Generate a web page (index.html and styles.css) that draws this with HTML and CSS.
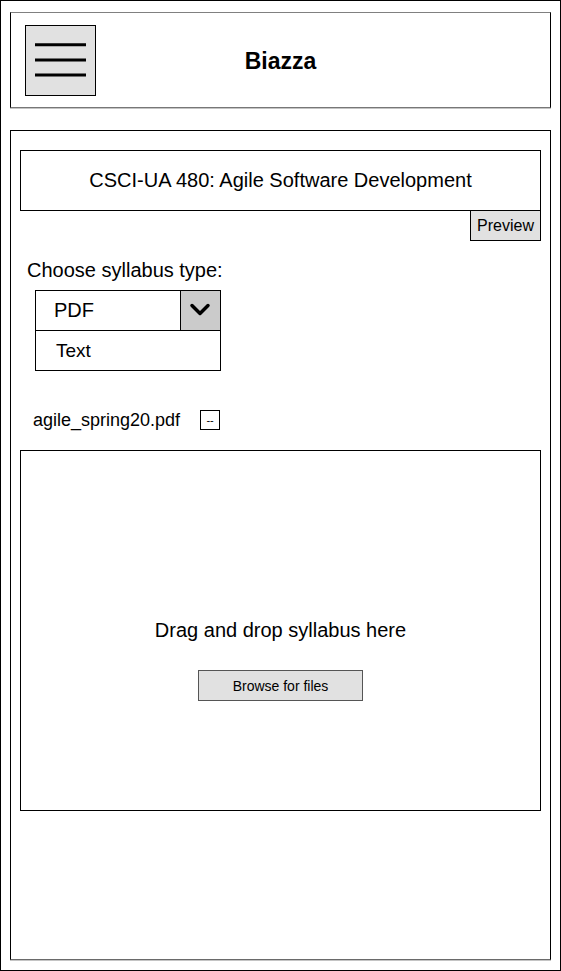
FILE: index.html
```html
<!DOCTYPE html>
<html lang="en">
<head>
<meta charset="utf-8">
<title>Biazza</title>
<link rel="stylesheet" href="styles.css">
</head>
<body>
<div class="frame">
  <header class="topbar">
    <button class="menu-btn" aria-label="Menu">
      <svg width="69" height="69" viewBox="0 0 69 69">
        <line x1="9" y1="18.8" x2="60" y2="18.8" stroke="#000" stroke-width="3"/>
        <line x1="9" y1="34" x2="60" y2="34" stroke="#000" stroke-width="3"/>
        <line x1="9" y1="49" x2="60" y2="49" stroke="#000" stroke-width="3"/>
      </svg>
    </button>
    <h1 class="brand">Biazza</h1>
    <span class="spacer"></span>
  </header>
  <main class="panel">
    <div class="course-title">CSCI-UA 480: Agile Software Development</div>
    <button class="preview-btn">Preview</button>
    <p class="label">Choose syllabus type:</p>
    <div class="select">
      <div class="select-row selected">
        <span class="opt opt-pdf">PDF</span>
        <span class="caret">
          <svg width="39" height="38" viewBox="0 0 39 38">
            <polyline points="11,14.5 19,22.5 27,14.5" fill="none" stroke="#000" stroke-width="3.5" stroke-linecap="round" stroke-linejoin="round"/>
          </svg>
        </span>
      </div>
      <div class="select-row">
        <span class="opt opt-text">Text</span>
      </div>
    </div>
    <div class="file-row">
      <span class="file-name">agile_spring20.pdf</span>
      <button class="remove-btn">--</button>
    </div>
    <div class="dropzone">
      <p class="drop-text">Drag and drop syllabus here</p>
      <button class="browse-btn">Browse for files</button>
    </div>
  </main>
</div>
</body>
</html>
```
FILE: styles.css
```css
html, body {
  margin: 0;
  padding: 0;
  background: #fff;
}

body {
  font-family: "Liberation Sans", Arial, sans-serif;
  color: #000;
}

.frame {
  width: 561px;
  height: 971px;
  box-sizing: border-box;
  border: 1px solid #000;
  padding: 11px 9px 10px;
  display: flex;
  flex-direction: column;
}

.topbar {
  height: 96px;
  box-sizing: border-box;
  border: 1px solid #000;
  border-top-color: #808080;
  border-bottom-color: #777;
  box-shadow: 0 1px 0 #c4c4c4;
  display: grid;
  grid-template-columns: 1fr auto 1fr;
  align-items: center;
  flex: none;
}

.menu-btn {
  width: 71px;
  height: 71px;
  box-sizing: border-box;
  border: 1px solid #000;
  background: #e1e1e1;
  padding: 0;
  margin: 0 0 0 14px;
  display: block;
  justify-self: start;
}

.menu-btn svg {
  display: block;
}

.brand {
  margin: 2px 0 0;
  font-size: 23px;
  font-weight: 700;
  line-height: 26px;
}

.panel {
  flex: 1;
  margin-top: 22px;
  box-sizing: border-box;
  border: 1px solid #000;
  border-bottom-color: #6a6a6a;
  box-shadow: 0 1px 0 #c4c4c4;
  padding: 19px 9px 0;
  display: flex;
  flex-direction: column;
}

.course-title {
  height: 61px;
  box-sizing: border-box;
  border: 1px solid #000;
  display: flex;
  align-items: center;
  justify-content: center;
  font-size: 20px;
}

.preview-btn {
  align-self: flex-end;
  width: 71px;
  height: 31px;
  margin-top: -1px;
  box-sizing: border-box;
  border: 1px solid #000;
  background: #e1e1e1;
  font-family: inherit;
  font-size: 16px;
  color: #000;
  padding: 0;
}

.label {
  margin: 18px 0 0 7px;
  font-size: 20px;
  line-height: 23px;
}

.select {
  margin: 8px 0 0 15px;
  width: 186px;
  box-sizing: border-box;
  border: 1px solid #000;
}

.select-row {
  display: flex;
  align-items: center;
  height: 39px;
  box-sizing: border-box;
}

.select-row.selected {
  height: 40px;
  border-bottom: 1px solid #000;
}

.opt {
  font-size: 19px;
}

.opt-pdf {
  padding-left: 18px;
  font-size: 20px;
}

.opt-text {
  padding-left: 20px;
}

.caret {
  margin-left: auto;
  width: 40px;
  height: 100%;
  box-sizing: border-box;
  border-left: 1px solid #000;
  background: #cbcbcb;
  display: block;
}

.caret svg {
  display: block;
}

.file-row {
  display: flex;
  align-items: center;
  gap: 20px;
  margin-top: 39px;
  padding-left: 13px;
  height: 20px;
}

.file-name {
  font-size: 18px;
}

.remove-btn {
  width: 20px;
  height: 20px;
  box-sizing: border-box;
  border: 1px solid #000;
  background: #fff;
  font-family: inherit;
  font-size: 11px;
  line-height: 1;
  color: #000;
  padding: 0;
}

.dropzone {
  margin-top: 20px;
  height: 361px;
  box-sizing: border-box;
  border: 1px solid #000;
  display: flex;
  flex-direction: column;
  align-items: center;
  padding-top: 168px;
}

.drop-text {
  margin: 0;
  font-size: 20px;
  line-height: 23px;
}

.browse-btn {
  margin-top: 28px;
  width: 165px;
  height: 31px;
  box-sizing: border-box;
  border: 1px solid #555;
  background: #e1e1e1;
  font-family: inherit;
  font-size: 14px;
  color: #000;
  padding: 0;
}
```
